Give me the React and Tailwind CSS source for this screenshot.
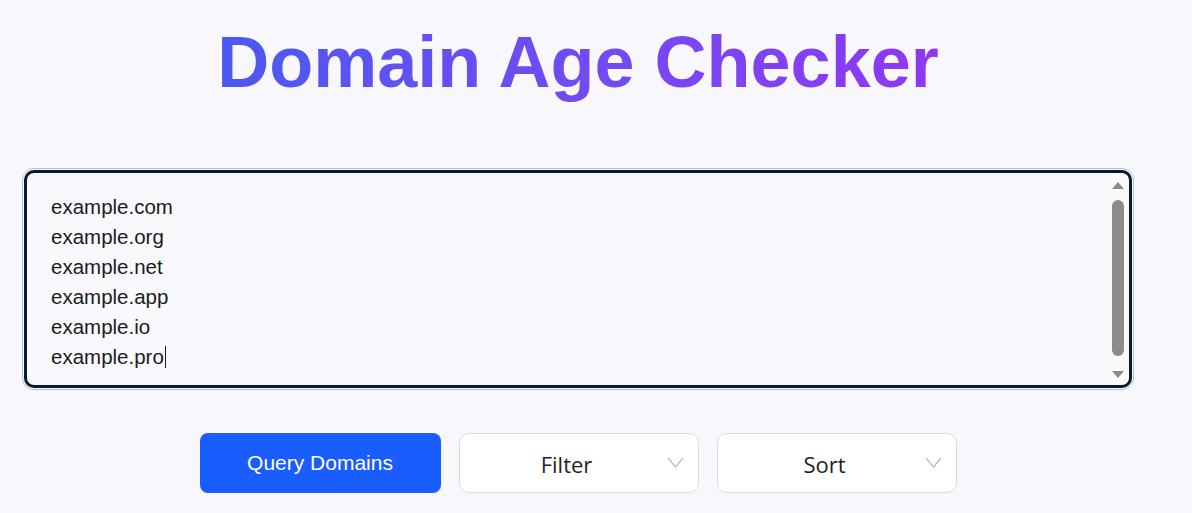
const domains = [
  "example.com",
  "example.org",
  "example.net",
  "example.app",
  "example.io",
  "example.pro",
];

function SelectBox({ label }) {
  return (
    <div className="relative flex h-[60px] w-[240px] items-center justify-center rounded-[10px] border border-[#dcdcdc] bg-white pr-[24px] pt-[3px]">
      <span className="text-[22px] text-[#1f1f1f] [font-family:'Open_Sans',sans-serif]">{label}</span>
      <svg className="absolute right-[14px] top-[23px]" width="17" height="11" viewBox="0 0 17 11" fill="none">
        <polyline points="1,1 8.5,10 16,1" stroke="#b9b9b9" strokeWidth="1.2" />
      </svg>
    </div>
  );
}

export default function App() {
  return (
    <div className="min-h-[513px] w-full bg-[#f8f7fb] [font-family:'Liberation_Sans',Arial,sans-serif]">
      <div className="flex w-[1156px] flex-col items-center px-[22px] pt-[22px]">
        {/* title */}
        <h1 className="bg-gradient-to-r from-[#4a58f2] to-[#8e37f3] bg-clip-text text-[72px] font-bold leading-[80px] text-transparent">
          Domain Age Checker
        </h1>

        {/* textarea look-alike */}
        <div className="mt-[66px] w-full rounded-[12px] border border-[#a8c3e4] p-px">
          <div className="flex h-[218px] rounded-[10px] border-[3px] border-[#0d1a2c] bg-[#f9f8fc]">
            <div className="flex-1 pl-[24px] pt-[19px] text-[20.5px] leading-[30px] text-[#1c1c1c]">
              {domains.map((d, i) => (
                <div key={d}>
                  {d}
                  {i === domains.length - 1 && (
                    <span className="ml-px inline-block h-[22px] w-px translate-y-[4px] bg-[#1c1c1c]" />
                  )}
                </div>
              ))}
            </div>
            {/* scrollbar */}
            <div className="mr-[3px] flex w-[17px] flex-col items-center rounded-r-[8px] bg-[#fafafa] pb-[7px] pt-[9px]">
              <div className="h-0 w-0 border-x-[6px] border-b-[7px] border-x-transparent border-b-[#8a8a8a]" />
              <div className="mt-[11px] w-[12px] flex-1 rounded-full bg-[#8c8c8c]" />
              <div className="mt-[15px] h-0 w-0 border-x-[6px] border-t-[7px] border-x-transparent border-t-[#8a8a8a]" />
            </div>
          </div>
        </div>

        {/* actions */}
        <div className="mt-[43px] flex gap-[18px]">
          <button className="h-[60px] w-[241px] rounded-[8px] bg-[#1a5dff] text-[21px] text-white">
            Query Domains
          </button>
          <SelectBox label="Filter" />
          <SelectBox label="Sort" />
        </div>
      </div>
    </div>
  );
}
